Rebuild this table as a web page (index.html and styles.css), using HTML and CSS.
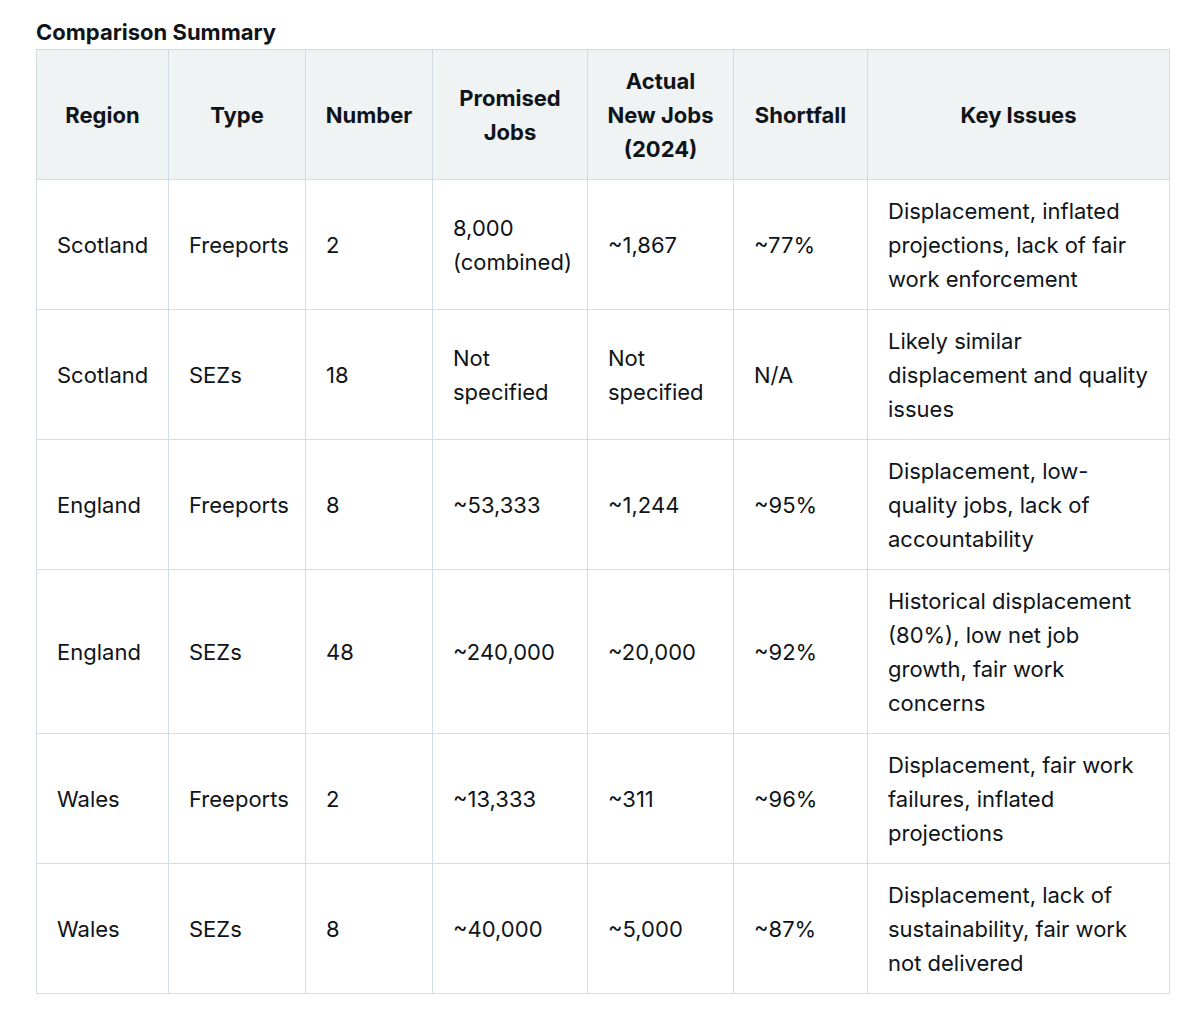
FILE: index.html
```html
<!DOCTYPE html>
<html>
<head>
<meta charset="utf-8">
<link rel="stylesheet" href="styles.css">
</head>
<body>
<div class="page">
  <h2 class="title">Comparison Summary</h2>
  <table class="cmp">
    <colgroup>
      <col class="c1"><col class="c2"><col class="c3"><col class="c4"><col class="c5"><col class="c6"><col class="c7">
    </colgroup>
    <thead>
      <tr>
        <th>Region</th><th>Type</th><th>Number</th><th>Promised Jobs</th><th>Actual New Jobs (2024)</th><th>Shortfall</th><th>Key Issues</th>
      </tr>
    </thead>
    <tbody>
      <tr><td>Scotland</td><td>Freeports</td><td>2</td><td>8,000 (combined)</td><td>~1,867</td><td>~77%</td><td>Displacement, inflated projections, lack of fair work enforcement</td></tr>
      <tr><td>Scotland</td><td>SEZs</td><td>18</td><td>Not specified</td><td>Not specified</td><td>N/A</td><td>Likely similar displacement and quality issues</td></tr>
      <tr><td>England</td><td>Freeports</td><td>8</td><td>~53,333</td><td>~1,244</td><td>~95%</td><td>Displacement, low-quality jobs, lack of accountability</td></tr>
      <tr><td>England</td><td>SEZs</td><td>48</td><td>~240,000</td><td>~20,000</td><td>~92%</td><td>Historical displacement (80%), low net job growth, fair work concerns</td></tr>
      <tr><td>Wales</td><td>Freeports</td><td>2</td><td>~13,333</td><td>~311</td><td>~96%</td><td>Displacement, fair work failures, inflated projections</td></tr>
      <tr><td>Wales</td><td>SEZs</td><td>8</td><td>~40,000</td><td>~5,000</td><td>~87%</td><td>Displacement, lack of sustainability, fair work not delivered</td></tr>
    </tbody>
  </table>
</div>
</body>
</html>
```

FILE: styles.css
```css
html, body {
  margin: 0;
  padding: 0;
  background: #ffffff;
}
.page {
  padding: 19px 31px 0 36px;
  font-family: Inter, "Noto Sans", sans-serif;
  color: #0f1419;
}
.title {
  margin: 0 0 4px 0;
  font-size: 22px;
  line-height: 26px;
  font-weight: 700;
}
.cmp {
  border-collapse: collapse;
  table-layout: fixed;
  width: 1133px;
  font-size: 22px;
  line-height: 34px;
}
.c1 { width: 132px; }
.c2 { width: 137px; }
.c3 { width: 127px; }
.c4 { width: 155px; }
.c5 { width: 146px; }
.c6 { width: 134px; }
.c7 { width: 302px; }
.cmp th, .cmp td {
  border: 1px solid #d3dce2;
  vertical-align: middle;
}
.cmp th {
  padding: 13.5px 15px;
  background: #eff3f4;
  font-weight: 700;
  text-align: center;
  height: 102px;
}
.cmp td {
  padding: 13.5px 20px;
  text-align: left;
  font-weight: 400;
  height: 102px;
}
```
